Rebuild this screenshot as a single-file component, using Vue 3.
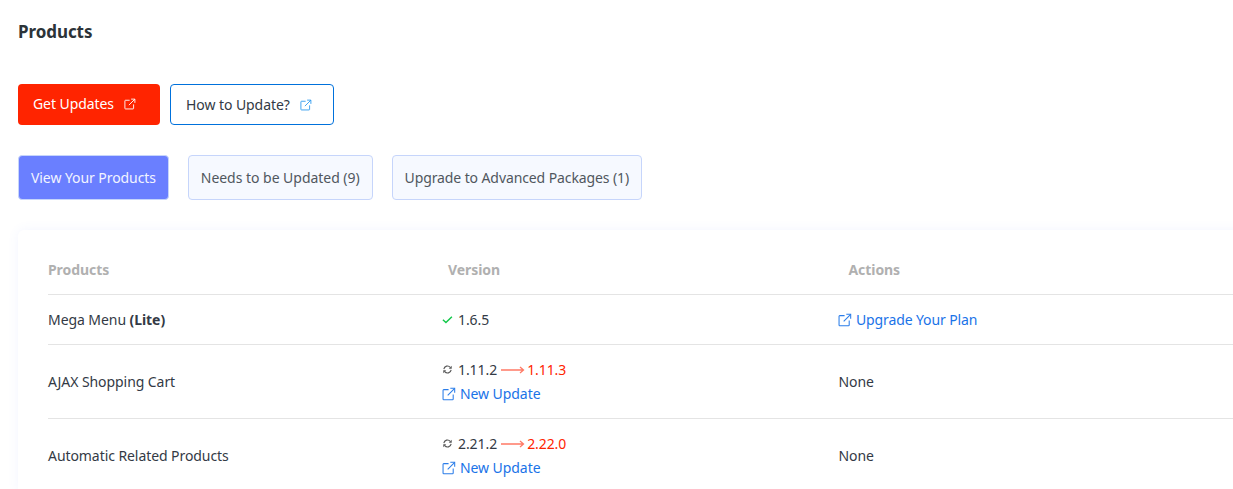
<script setup>
const tabs = [
  { label: 'View Your Products', active: true },
  { label: 'Needs to be Updated (9)' },
  { label: 'Upgrade to Advanced Packages (1)' }
]

const rows = [
  { name: 'AJAX Shopping Cart', from: '1.11.2', to: '1.11.3' },
  { name: 'Automatic Related Products', from: '2.21.2', to: '2.22.0' }
]

// external link icon
const extPaths = [
  'M7.5 3H2a.8.8 0 0 0-.8.8v10a.8.8 0 0 0 .8.8h10a.8.8 0 0 0 .8-.8V8.5',
  'M6.5 9.5 14.5 1.5',
  'M9.5 1.5h5v5'
]
</script>

<template>
  <div class="page">
    <h1 class="title">Products</h1>

    <div class="actions">
      <a class="btn btn-red">
        Get Updates
        <svg class="ext ext-btn" viewBox="0 0 16 16"><path v-for="d in extPaths" :key="d" :d="d" /></svg>
      </a>
      <a class="btn btn-outline">
        How to Update?
        <svg class="ext ext-btn" viewBox="0 0 16 16"><path v-for="d in extPaths" :key="d" :d="d" /></svg>
      </a>
    </div>

    <div class="tabs">
      <a v-for="t in tabs" :key="t.label" class="tab" :class="{ active: t.active }">{{ t.label }}</a>
    </div>

    <div class="card">
      <div class="row head">
        <div class="cell">Products</div>
        <div class="cell">Version</div>
        <div class="cell">Actions</div>
      </div>

      <div class="row first">
        <div class="cell">Mega Menu <b>(Lite)</b></div>
        <div class="cell ver">
          <div class="line">
            <svg class="state" viewBox="0 0 12 12"><path class="check" d="M1 6.2 4.3 9.2 10.8 3" /></svg>
            <span>1.6.5</span>
          </div>
        </div>
        <div class="cell act">
          <a class="link">
            <svg class="ext" viewBox="0 0 16 16"><path v-for="d in extPaths" :key="d" :d="d" /></svg>
            Upgrade Your Plan
          </a>
        </div>
      </div>

      <div v-for="r in rows" :key="r.name" class="row">
        <div class="cell">{{ r.name }}</div>
        <div class="cell ver">
          <div class="line">
            <svg class="state" viewBox="0 0 12 12">
              <path class="sync" d="M2 5.5A4 4 0 0 1 9 3.6" />
              <path class="sync" d="M10 6.5A4 4 0 0 1 3 8.4" />
              <path class="tip" d="M10.6 2v3.2H7.4zM1.4 10V6.8h3.2z" />
            </svg>
            <span>{{ r.from }}</span>
            <svg class="arrow" viewBox="0 0 24 8"><path d="M0 4h22M19 1l3.5 3L19 7" /></svg>
            <span class="new">{{ r.to }}</span>
          </div>
          <a class="link">
            <svg class="ext" viewBox="0 0 16 16"><path v-for="d in extPaths" :key="d" :d="d" /></svg>
            New Update
          </a>
        </div>
        <div class="cell act">None</div>
      </div>
    </div>
  </div>
</template>

<style>
html, body {
  overflow: hidden;
  background: #fff;
}
</style>

<style scoped>
.page {
  padding: 19px 0 0 18px;
  height: 470px;
  overflow: hidden;
  font-family: "Noto Sans", "Open Sans", sans-serif;
  font-size: 14px;
  letter-spacing: -0.07px;
  color: #333a45;
}

.title {
  margin: 0;
  font-size: 17px;
  line-height: 26px;
  font-weight: 700;
  color: #2c3338;
}

.actions {
  display: flex;
  gap: 10px;
  margin-top: 39px;
}

.btn {
  display: flex;
  align-items: center;
  box-sizing: border-box;
  height: 41px;
  border-radius: 4px;
  font-size: 14px;
  padding-bottom: 2px;
}

.btn-red {
  width: 142px;
  padding-left: 15px;
  background: #ff2400;
  color: #fff;
}

.btn-outline {
  width: 164px;
  padding-left: 15px;
  padding-bottom: 0;
  border: 1px solid #0071dc;
  color: #333a45;
}

.btn-outline .ext {
  stroke: #2f9bef;
}

.btn-red .ext {
  stroke: #fff;
}

.ext {
  width: 14px;
  height: 14px;
  fill: none;
  stroke: #2b7de9;
  stroke-width: 1.2;
  flex: none;
}

.ext-btn {
  width: 12px;
  height: 12px;
  margin-left: 10px;
}

.tabs {
  display: flex;
  gap: 18.8px;
  margin-top: 30px;
}

.tab {
  box-sizing: border-box;
  height: 45px;
  padding: 0 12px;
  display: flex;
  align-items: center;
  border: 1px solid #c6d5fb;
  border-radius: 4px;
  background: #f6f9ff;
  color: #50575e;
  font-size: 14px;
}

.tab:nth-child(2) {
  letter-spacing: -0.03px;
}

.tab:nth-child(3) {
  letter-spacing: -0.1px;
}

.tab.active {
  background: #6a7fff;
  color: #f2f4ff;
}

.card {
  margin-top: 30px;
  margin-right: -60px;
  padding: 15px 30px 0;
  background: #fff;
  border-radius: 6px;
  box-shadow: 0 0 12px rgba(90, 110, 255, 0.07);
}

.row {
  display: grid;
  grid-template-columns: 400px 400.5px 1fr;
  border-bottom: 1px solid #e4e4e4;
  min-height: 73px;
  align-items: center;
}

.row.first {
  min-height: 49px;
}

.head {
  min-height: 49px;
  font-weight: 700;
  color: #b0b0b0;
}

.ver {
  margin-left: -6px;
  line-height: 24px;
}

.act {
  margin-left: -10px;
}

.line {
  display: flex;
  align-items: center;
}

.state {
  width: 11px;
  height: 11px;
  margin-right: 5px;
  fill: none;
  flex: none;
}

.check {
  stroke: #12c84a;
  stroke-width: 1.6;
}

.sync {
  stroke: #555;
  stroke-width: 1.2;
}

.tip {
  fill: #555;
}

.arrow {
  width: 24px;
  height: 8px;
  margin: 0 2.5px 0 3.5px;
  fill: none;
  stroke: #ff7a66;
  stroke-width: 1.3;
}

.new {
  color: #ff2400;
}

.link {
  display: flex;
  align-items: center;
  gap: 4px;
  color: #1a73e8;
}

.act .link {
  margin-left: -0.5px;
  letter-spacing: -0.12px;
}

b {
  font-weight: 700;
}
</style>
